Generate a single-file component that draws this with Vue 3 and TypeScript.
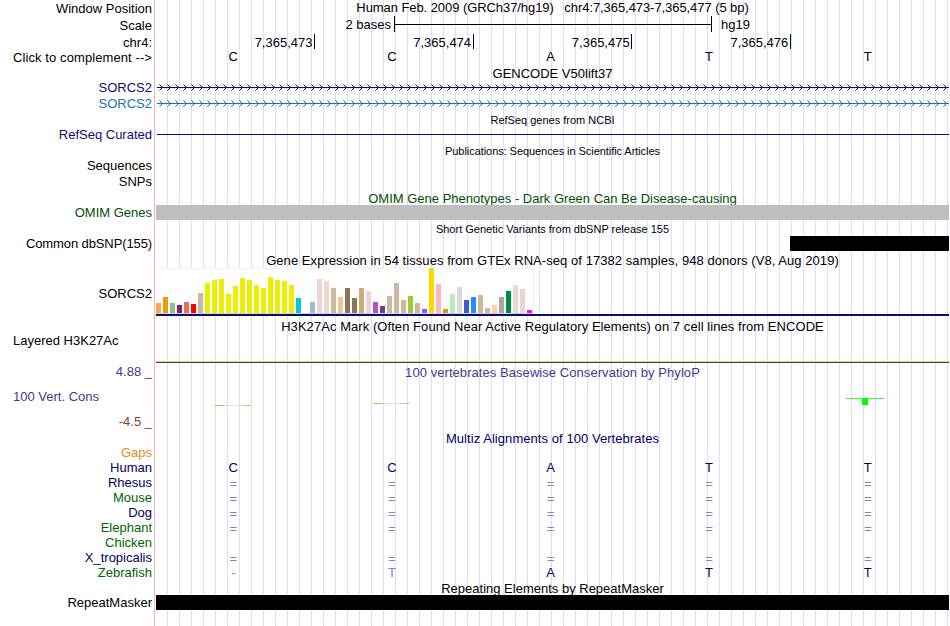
<script setup lang="ts">
interface Species {
  name: string
  tone: string
  bases: string[]
}

const windowTitle = 'Human Feb. 2009 (GRCh37/hg19)   chr4:7,365,473-7,365,477 (5 bp)'
const bases = ['C', 'C', 'A', 'T', 'T']
const positions = ['7,365,473', '7,365,474', '7,365,475', '7,365,476']

// 8px pitch along the intron line
const arrows = Array.from({ length: 99 }, (_, i) => i * 8 + 3.5)

// [color, height] per GTEx tissue
const tissues: [string, number][] = [
  ['#ffa54f', 10], ['#ee9a00', 16], ['#8fbc8f', 10], ['#8b1c62', 8], ['#ee6a50', 11], ['#ff0000', 9],
  ['#cdb79e', 20], ['#eeee00', 30], ['#eeee00', 33], ['#eeee00', 34], ['#eeee00', 19], ['#eeee00', 27],
  ['#eeee00', 35], ['#eeee00', 33], ['#eeee00', 28], ['#eeee00', 25], ['#eeee00', 36], ['#eeee00', 33],
  ['#eeee00', 32], ['#eeee00', 28], ['#00cdcd', 15], ['#ee82ee', 0], ['#9ac0cd', 11], ['#eed5d2', 34],
  ['#eed5d2', 32], ['#cdb79e', 25], ['#eec591', 16], ['#8b7355', 25], ['#8b7355', 15], ['#cdaa7d', 25],
  ['#eed5d2', 22], ['#b452cd', 11], ['#7a378b', 7], ['#cdb79e', 17], ['#cdb79e', 30], ['#cdb79e', 13],
  ['#9acd32', 17], ['#cdb79e', 10], ['#7a67ee', 4], ['#ffd700', 45], ['#ffb6c1', 29], ['#cd9b1d', 4],
  ['#b4eeb4', 19], ['#d9d9d9', 26], ['#3a5fcd', 13], ['#1e90ff', 16], ['#cdb79e', 18], ['#cdb79e', 5],
  ['#ffd39b', 8], ['#a6a6a6', 16], ['#008b45', 22], ['#eed5d2', 28], ['#eed5d2', 24], ['#ff00ff', 3]
]

const same = ['=', '=', '=', '=', '=']
const species: Species[] = [
  { name: 'Gaps', tone: 'orange', bases: [] },
  { name: 'Human', tone: 'navy', bases },
  { name: 'Rhesus', tone: 'navy', bases: same },
  { name: 'Mouse', tone: 'green', bases: same },
  { name: 'Dog', tone: 'navy', bases: same },
  { name: 'Elephant', tone: 'green', bases: same },
  { name: 'Chicken', tone: 'green', bases: [] },
  { name: 'X_tropicalis', tone: 'navy', bases: same },
  { name: 'Zebrafish', tone: 'green', bases: ['-', 'T', 'A', 'T', 'T'] }
]

function isFaint(row: Species, i: number) {
  return row.bases[i] !== bases[i]
}
</script>

<template>
  <div class="browser">
    <div class="row h17">
      <div class="label low">Window Position</div>
      <div class="track title-text pre">{{ windowTitle }}</div>
    </div>

    <div class="row h17">
      <div class="label low">Scale</div>
      <div class="track scale">
        <span class="scale-left">2 bases</span>
        <span class="scale-bar"><i /></span>
        <span>hg19</span>
      </div>
    </div>

    <div class="row h15">
      <div class="label low">chr4:</div>
      <div class="track ruler">
        <span v-for="p in positions" :key="p" class="tick">{{ p }}</span>
      </div>
    </div>

    <div class="row h17">
      <div class="label low wide">Click to complement --&gt;</div>
      <div class="track bases">
        <span v-for="(b, i) in bases" :key="i">{{ b }}</span>
      </div>
    </div>

    <!-- GENCODE -->
    <div class="row title h14"><div class="label" /><div class="track">GENCODE V50lift37</div></div>
    <div v-for="tone in ['gene', 'gene-alt']" :key="tone" class="row h16" :class="tone">
      <div class="label">SORCS2</div>
      <div class="track">
        <svg class="intron" width="793" height="16">
          <path class="line" d="M1 7.5H793" />
          <path v-for="x in arrows" :key="x" class="line" :d="`M${x} 4.5l3 3l-3 3`" />
        </svg>
      </div>
    </div>

    <!-- RefSeq -->
    <div class="row title small h15"><div class="label" /><div class="track">RefSeq genes from NCBI</div></div>
    <div class="row h16">
      <div class="label refseq">RefSeq Curated</div>
      <div class="track"><div class="refseq-line" /></div>
    </div>

    <!-- Publications -->
    <div class="row title small h15"><div class="label" /><div class="track tight">Publications: Sequences in Scientific Articles</div></div>
    <div class="row h16"><div class="label">Sequences</div></div>
    <div class="row h16"><div class="label">SNPs</div></div>

    <!-- OMIM -->
    <div class="row title omim h15"><div class="label" /><div class="track">OMIM Gene Phenotypes - Dark Green Can Be Disease-causing</div></div>
    <div class="row omim h15">
      <div class="label">OMIM Genes</div>
      <div class="track"><div class="block grey" /></div>
    </div>

    <!-- dbSNP -->
    <div class="row title small h16"><div class="label" /><div class="track">Short Genetic Variants from dbSNP release 155</div></div>
    <div class="row h15">
      <div class="label tighter">Common dbSNP(155)</div>
      <div class="track"><div class="block snp" /></div>
    </div>

    <!-- GTEx -->
    <div class="row title h16"><div class="label" /><div class="track loose">Gene Expression in 54 tissues from GTEx RNA-seq of 17382 samples, 948 donors (V8, Aug 2019)</div></div>
    <div class="row h50 gtex">
      <div class="label">SORCS2</div>
      <div class="track">
        <div class="chart">
          <div v-for="(t, i) in tissues" :key="i" class="bar" :style="{ height: `${t[1]}px`, background: t[0] }" />
        </div>
        <div class="gene-model" />
      </div>
    </div>

    <!-- H3K27Ac -->
    <div class="row title h16"><div class="label" /><div class="track loose">H3K27Ac Mark (Often Found Near Active Regulatory Elements) on 7 cell lines from ENCODE</div></div>
    <div class="row h32">
      <div class="label left">Layered H3K27Ac</div>
      <div class="track"><div class="signal" /></div>
    </div>

    <!-- PhyloP -->
    <div class="row title cons h14"><div class="label">4.88 _</div><div class="track loose">100 vertebrates Basewise Conservation by PhyloP</div></div>
    <div class="row h50 cons">
      <div class="label cons-labels">
        <span class="cons-name">100 Vert. Cons</span>
        <span class="cons-min">-4.5 _</span>
      </div>
      <div class="track">
        <svg width="793" height="50" shape-rendering="crispEdges">
          <defs>
            <linearGradient id="faint">
              <stop offset="0" stop-color="#d8d890" />
              <stop offset="0.12" stop-color="#b0b020" />
              <stop offset="0.3" stop-color="#dede9c" />
              <stop offset="0.55" stop-color="#eeeed0" />
              <stop offset="0.75" stop-color="#dede9c" />
              <stop offset="0.9" stop-color="#bcbc48" />
              <stop offset="1" stop-color="#f0f0d8" />
            </linearGradient>
          </defs>
          <rect x="58" y="26" width="38" height="1" fill="url(#faint)" />
          <rect x="217" y="24" width="38" height="1" fill="url(#faint)" />
          <rect x="690" y="19" width="38" height="1" fill="#32ff32" />
          <rect x="706" y="19" width="6" height="7" fill="#00ff00" />
        </svg>
      </div>
    </div>

    <!-- Multiz -->
    <div class="row title navy h16"><div class="label" /><div class="track loose">Multiz Alignments of 100 Vertebrates</div></div>
    <div v-for="s in species" :key="s.name" class="row h15">
      <div class="label" :class="s.tone">{{ s.name }}</div>
      <div class="track bases navy">
        <span v-for="(b, i) in s.bases" :key="i" :class="{ faint: isFaint(s, i), same: b === '=' }">{{ b }}</span>
      </div>
    </div>

    <!-- RepeatMasker -->
    <div class="row title h15"><div class="label" /><div class="track">Repeating Elements by RepeatMasker</div></div>
    <div class="row h15">
      <div class="label">RepeatMasker</div>
      <div class="track"><div class="block" /></div>
    </div>
  </div>
</template>

<style>
body {
  margin: 0;
  background: #fff;
}
</style>

<style scoped>
.browser {
  position: relative;
  width: 949px;
  height: 626px;
  overflow: hidden;
  color: #000;
  font: 13px/15px 'Liberation Sans', Arial, sans-serif;
  white-space: nowrap;
}

/* guide lines behind the tracks */
.browser::before {
  content: '';
  position: absolute;
  inset: 0 0 0 167px;
  z-index: -1;
  background: repeating-linear-gradient(90deg, #dcdcff 0 1px, transparent 1px 12px);
}

.browser::after {
  content: '';
  position: absolute;
  inset: 0 auto 0 154px;
  width: 1px;
  background: #ffb4b4;
}

.row {
  display: flex;
  align-items: flex-start;
}

.h14 { height: 14px; }
.h15 { height: 15px; }
.h16 { height: 16px; }
.h17 { height: 17px; }
.h32 { height: 32px; }
.h50 { height: 50px; }

.label {
  flex: none;
  width: 152px;
  margin-right: 4px;
  text-align: right;
}

.label.low {
  padding-top: 1px;
}

.label.left {
  box-sizing: border-box;
  padding-left: 13px;
  text-align: left;
}

.track {
  flex: none;
  width: 793px;
}

.title {
  align-items: flex-end;
}

.title .track,
.title-text {
  text-align: center;
}

.title .track {
  margin-bottom: -1px;
}

.title.small .track {
  font-size: 11px;
}

.pre {
  letter-spacing: -0.07px;
  white-space: pre;
}

.loose { letter-spacing: 0.06px; }
.wide { letter-spacing: 0.09px; }
.tight { letter-spacing: -0.06px; }
.tighter { letter-spacing: -0.11px; }

/* scale and ruler */
.scale {
  display: flex;
}

.scale-left {
  width: 235px;
  margin-right: 3px;
  text-align: right;
}

.scale-bar {
  display: flex;
  align-items: center;
  box-sizing: border-box;
  width: 318px;
  height: 16px;
  margin: -1px 9px 0 0;
  border: solid #000;
  border-width: 0 1px;
}

.scale-bar i {
  width: 100%;
  height: 1px;
  background: #000;
}

.ruler {
  display: flex;
  margin-left: 0.4px;
}

.tick {
  box-sizing: border-box;
  width: 158.6px;
  height: 15px;
  padding: 1px 1.5px 0 0;
  border-right: 1px solid #000;
  text-align: right;
}

.bases {
  display: flex;
  margin-left: -2px;
}

.bases span {
  width: 158.6px;
  text-align: center;
}

.faint {
  color: #8484b8;
}

.bases .same {
  padding-top: 1px;
}

/* items */
.intron {
  display: block;
}

.line {
  fill: none;
  stroke: currentColor;
}

.gene { color: #0c0c78; }
.gene-alt { color: #1e6eb4; }
.refseq { color: #0c0c78; }
.omim { color: #005000; }
.navy { color: #000064; }
.green { color: #006400; }
.orange { color: #e68c14; }
.cons { color: #3c3c8c; }

.refseq-line {
  height: 1px;
  margin: 7px 0 0 1px;
  background: #0c0c78;
}

.block {
  position: relative;
  height: 15px;
  background: #000;
}

.block.grey {
  background: #bebebe;
}

.block.snp {
  margin-left: 634px;
}

.gtex .label {
  padding-top: 19px;
}

.chart {
  display: flex;
  align-items: flex-end;
  gap: 2px;
  box-sizing: border-box;
  width: 378px;
  height: 46px;
  margin-top: 1px;
  border-bottom: 1px solid #d3d3d3;
  background: #fff;
  box-shadow: inset -1px 1px #f0f0f0;
}

.bar {
  width: 5px;
}

.gene-model {
  height: 2px;
  background: #0c0c78;
}

.signal {
  height: 1px;
  margin-top: 28px;
  border-bottom: 1px solid #28465a;
  background: #ffc864;
}

.cons-labels {
  display: flex;
  flex-direction: column;
}

.cons-name {
  padding: 10px 0 10px 13px;
  text-align: left;
}

.cons-min {
  color: #8c3c3c;
}
</style>
